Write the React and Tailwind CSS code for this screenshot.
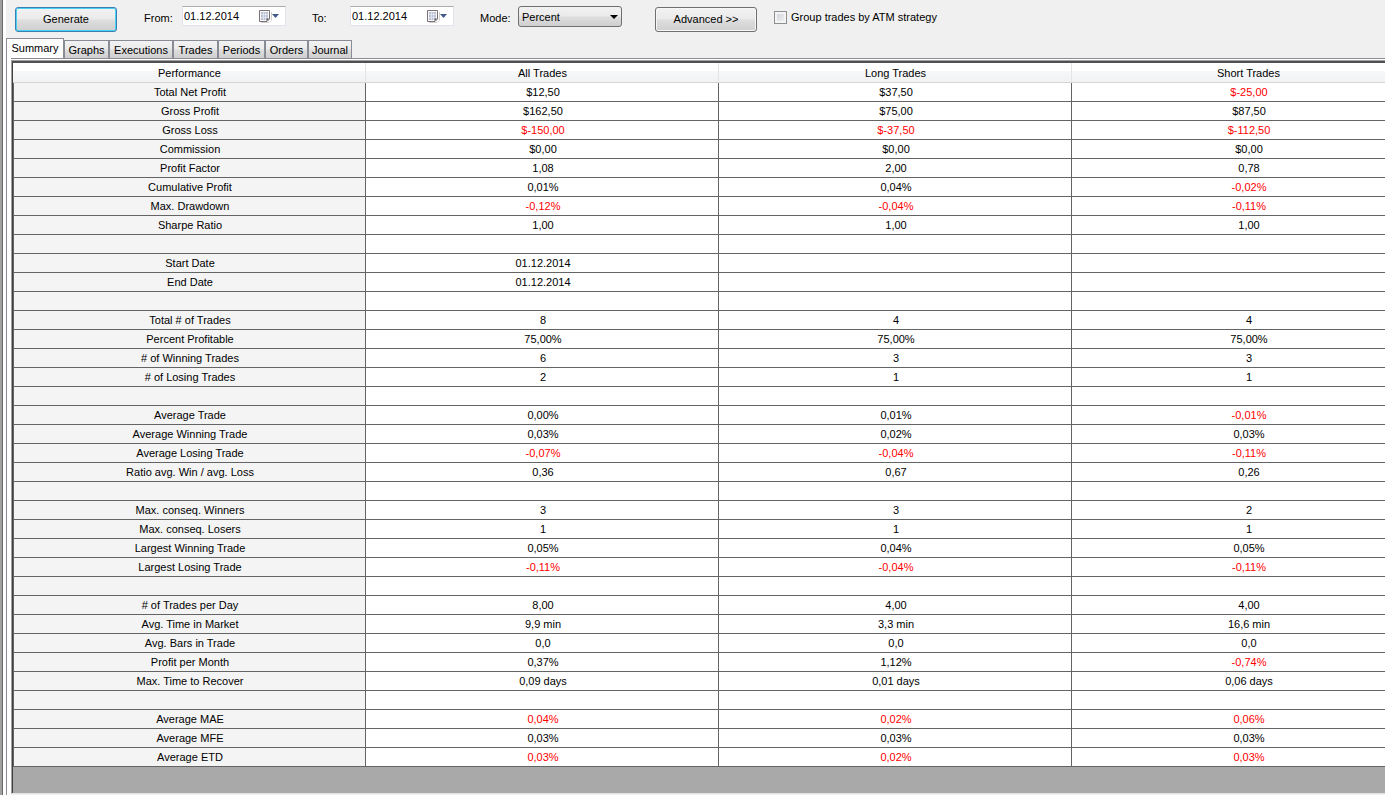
import React, { useState } from 'react';

const tabs = [
  { name: 'Graphs', width: 'w-[45px]' },
  { name: 'Executions', width: 'w-[64px]' },
  { name: 'Trades', width: 'w-[45px]' },
  { name: 'Periods', width: 'w-[47px]' },
  { name: 'Orders', width: 'w-[43px]' },
  { name: 'Journal', width: 'w-[44px]' },
];

const columns = ['Performance', 'All Trades', 'Long Trades', 'Short Trades'];

// An empty row separates the groups
const rows = [
  ['Total Net Profit', '$12,50', '$37,50', '$-25,00'],
  ['Gross Profit', '$162,50', '$75,00', '$87,50'],
  ['Gross Loss', '$-150,00', '$-37,50', '$-112,50'],
  ['Commission', '$0,00', '$0,00', '$0,00'],
  ['Profit Factor', '1,08', '2,00', '0,78'],
  ['Cumulative Profit', '0,01%', '0,04%', '-0,02%'],
  ['Max. Drawdown', '-0,12%', '-0,04%', '-0,11%'],
  ['Sharpe Ratio', '1,00', '1,00', '1,00'],
  ['', '', '', ''],
  ['Start Date', '01.12.2014', '', ''],
  ['End Date', '01.12.2014', '', ''],
  ['', '', '', ''],
  ['Total # of Trades', '8', '4', '4'],
  ['Percent Profitable', '75,00%', '75,00%', '75,00%'],
  ['# of Winning Trades', '6', '3', '3'],
  ['# of Losing Trades', '2', '1', '1'],
  ['', '', '', ''],
  ['Average Trade', '0,00%', '0,01%', '-0,01%'],
  ['Average Winning Trade', '0,03%', '0,02%', '0,03%'],
  ['Average Losing Trade', '-0,07%', '-0,04%', '-0,11%'],
  ['Ratio avg. Win / avg. Loss', '0,36', '0,67', '0,26'],
  ['', '', '', ''],
  ['Max. conseq. Winners', '3', '3', '2'],
  ['Max. conseq. Losers', '1', '1', '1'],
  ['Largest Winning Trade', '0,05%', '0,04%', '0,05%'],
  ['Largest Losing Trade', '-0,11%', '-0,04%', '-0,11%'],
  ['', '', '', ''],
  ['# of Trades per Day', '8,00', '4,00', '4,00'],
  ['Avg. Time in Market', '9,9 min', '3,3 min', '16,6 min'],
  ['Avg. Bars in Trade', '0,0', '0,0', '0,0'],
  ['Profit per Month', '0,37%', '1,12%', '-0,74%'],
  ['Max. Time to Recover', '0,09 days', '0,01 days', '0,06 days'],
  ['', '', '', ''],
  ['Average MAE', '0,04%', '0,02%', '0,06%'],
  ['Average MFE', '0,03%', '0,03%', '0,03%'],
  ['Average ETD', '0,03%', '0,02%', '0,03%'],
];

// MAE and ETD are always losses, even without a minus sign
const isLoss = (label, value) =>
  value.includes('-') || label === 'Average MAE' || label === 'Average ETD';

const CalendarIcon = () => (
  <svg width="24" height="14" viewBox="0 0 24 14" aria-hidden="true">
    <path d="M3 13.5h8l2.500-2.500V3" fill="none" stroke="#d3cfcf" />
    <path d="M1.500 1.500h10v8.500l-2.500 2.500h-7.500z" fill="#fbfbfd" stroke="#7d7072" />
    <path d="M3 3h7v8h-7z" fill="#b9c0d2" />
    <path d="M3 5.500h7M3 8.500h7M5.500 3v8M7.500 3v8" stroke="#f1f3f9" strokeWidth="0.6" />
    <path d="M8.500 12.500v-3h3z" fill="#6b6468" />
    <path d="M14 5h7l-3.500 4z" fill="#44598a" />
  </svg>
);

const DateField = ({ id, label, value, onChange }) => (
  <div className="flex">
    <label htmlFor={id} className="w-[38px] pt-[5px]">{label}</label>
    <div className="flex h-[20px] w-[104px] items-center border border-[#e2e3ea] border-t-[#abadb3] bg-white">
      <input
        id={id}
        type="text"
        value={value}
        onChange={(e) => onChange(e.target.value)}
        className="h-[18px] w-[75px] pl-px outline-none"
      />
      <button type="button" aria-label={`Open calendar: ${label}`}>
        <CalendarIcon />
      </button>
    </div>
  </div>
);

const App = () => {
  const [from, setFrom] = useState('01.12.2014');
  const [to, setTo] = useState('01.12.2014');
  const [mode, setMode] = useState('Percent');
  const [grouped, setGrouped] = useState(false);

  return (
    <div className="flex min-h-screen overflow-hidden bg-[#f0f0f0] font-['Liberation_Sans',Arial,sans-serif] text-[11px] leading-[14px] text-black">
      <div className="w-[3px] shrink-0 border-r border-[#696969] bg-[#a0a0a0]" />
      <div className="w-[3px] shrink-0 bg-white" />

      <div className="flex min-w-0 flex-1 flex-col">
        <div className="flex h-[38px] shrink-0 items-start whitespace-nowrap pl-[9px] pt-[6px]">
          <button
            type="button"
            className="mt-px h-[25px] w-[102px] rounded-[3px] border border-[#3c7fb1] bg-[linear-gradient(#f2f2f2,#ebebeb_45%,#dddddd_55%,#cfcfcf)] pb-[2px] shadow-[inset_0_0_0_1px_#48d0f5]"
          >
            Generate
          </button>

          <div className="ml-[27px] flex gap-[26px]">
            <DateField id="from" label="From:" value={from} onChange={setFrom} />
            <DateField id="to" label="To:" value={to} onChange={setTo} />
            <div className="flex">
              <label htmlFor="mode" className="w-[38px] pt-[5px]">Mode:</label>
              <div className="relative">
                <select
                  id="mode"
                  value={mode}
                  onChange={(e) => setMode(e.target.value)}
                  className="h-[21px] w-[104px] appearance-none rounded-[3px] border border-[#707070] bg-[linear-gradient(#f2f2f2,#ebebeb_45%,#dddddd_55%,#cfcfcf)] pl-[3px]"
                >
                  <option>Percent</option>
                  <option>Currency</option>
                  <option>Points</option>
                </select>
                <svg className="pointer-events-none absolute right-[4px] top-[9px]" width="8" height="4" aria-hidden="true">
                  <path d="M0 0h8l-4 4z" fill="#000" />
                </svg>
              </div>
            </div>
          </div>

          <button
            type="button"
            className="ml-[33px] mt-px h-[25px] w-[102px] rounded-[3px] border border-[#707070] bg-[linear-gradient(#f2f2f2,#ebebeb_45%,#dddddd_55%,#cfcfcf)] pb-[2px] shadow-[inset_0_0_0_1px_#f6f6f6]"
          >
            Advanced &gt;&gt;
          </button>

          <label className="ml-[17px] flex items-center gap-[4px] pt-[4px]">
            <input
              type="checkbox"
              checked={grouped}
              onChange={(e) => setGrouped(e.target.checked)}
              className="h-[13px] w-[13px] appearance-none border border-[#8e8f8f] bg-linear-to-br from-[#cbcfd5] to-[#f6f6f6] shadow-[inset_0_0_0_2px_#f4f4f4] checked:bg-[#44598a]"
            />
            Group trades by ATM strategy
          </label>
        </div>

        <div role="tablist" className="flex h-[20px] shrink-0 items-end">
          <button
            type="button"
            role="tab"
            aria-selected="true"
            className="h-[20px] w-[58px] border-x border-t border-[#898c95] bg-white pb-[2px]"
          >
            Summary
          </button>
          {tabs.map((tab) => (
            <button
              key={tab.name}
              type="button"
              role="tab"
              aria-selected="false"
              className={`h-[18px] border-x border-t border-[#898c95] bg-[linear-gradient(#f2f2f2,#ebebeb_45%,#dddddd_55%,#cfcfcf)] pt-px ${tab.width}`}
            >
              {tab.name}
            </button>
          ))}
        </div>

        <div className="flex flex-1">
          <div className="w-[5px] shrink-0 border-l border-[#898c95] bg-white" />
          <div className="flex min-w-0 flex-1 flex-col">
            <div className="h-[2px] shrink-0 border-t border-[#898c95] bg-white" />
            <div className="mb-px flex-1 overflow-hidden border-b border-l border-t border-b-[#e3e3e3] border-l-[#a0a0a0] border-t-[#a0a0a0]">
              <div className="h-full border-l border-t-2 border-l-[#404040] border-t-[#505050] bg-[#a9a9a9]">
                {/* the last column runs past the right edge of the panel */}
                <table className="w-[calc(100%+40px)] table-fixed border-separate border-spacing-0 text-center">
                  <thead>
                    <tr>
                      {columns.map((column) => (
                        <th
                          key={column}
                          className="h-[20px] border-b border-r border-b-[#d5d5d5] border-r-[#e4e5e6] bg-[linear-gradient(#ffffff_40%,#f7f8fa_40%,#f1f2f4)] p-0 pl-px font-normal"
                        >
                          {column}
                        </th>
                      ))}
                    </tr>
                  </thead>
                  <tbody>
                    {rows.map(([label, ...values], index) => (
                      <tr key={index}>
                        <th className="h-[19px] border-x border-b border-[#646464] bg-[#f4f4f4] p-0 pl-px font-normal">
                          {label}
                        </th>
                        {values.map((value, i) => (
                          <td
                            key={i}
                            className={`h-[19px] border-b border-r border-[#646464] bg-white p-0 pl-[2px] ${isLoss(label, value) ? 'text-[#ff0000]' : ''}`}
                          >
                            {value}
                          </td>
                        ))}
                      </tr>
                    ))}
                  </tbody>
                </table>
              </div>
            </div>
          </div>
        </div>
      </div>
    </div>
  );
};

export default App;
